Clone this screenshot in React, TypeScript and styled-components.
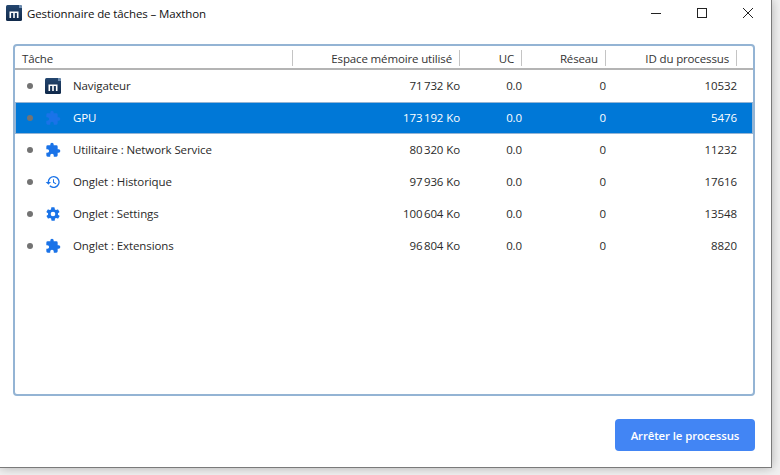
import React from "react";
import styled, { createGlobalStyle } from "styled-components";

const Global = createGlobalStyle`
  html, body { margin: 0; padding: 0; width: 780px; height: 475px; overflow: hidden; background: #f1f1f1; }
  body { font-family: "Open Sans", "Liberation Sans", sans-serif; font-size: 12px; color: #1b1b1b; }
`;

const Win = styled.div`
  width: 772px; height: 468px; box-sizing: border-box; background: #fff;
  border-right: 1px solid #7a7a7a; border-bottom: 1px solid #7a7a7a;
  box-shadow: 0 0 10px rgba(0,0,0,.28);
  display: flex; flex-direction: column;
`;
const TitleBar = styled.div`
  height: 44px; flex: none; display: flex; align-items: flex-start; padding: 5px 0 0 6px; box-sizing: border-box;
`;
const TitleText = styled.span`
  margin-left: 5px; margin-top: 1px; line-height: 16px; font-size: 11.5px; letter-spacing: -0.12px; color: #111;
`;
const WinBtns = styled.div`
  margin-left: auto; display: flex; gap: 30px; padding: 2px 15px 0 0;
`;
const Panel = styled.div`
  margin-left: 13px; width: 742px; height: 352px; box-sizing: border-box;
  border: 2px solid #94b4d4; border-radius: 4px; background: #fff; flex: none;
`;
const grid = `display: grid; grid-template-columns: 277px 167px 62px 84px 131px; padding-left: 1px;`;
const Head = styled.div`
  ${grid} height: 24px; box-sizing: border-box; padding-top: 2px; border-bottom: 2px solid #b4b4b4; align-items: center; font-size: 11.5px; letter-spacing: -0.14px; color: #333;
`;
const HeadCell = styled.div<{ $left?: boolean }>`
  height: 16px; line-height: 18px; box-sizing: border-box; border-right: 1px solid #c4c4c4; white-space: nowrap;
  text-align: ${p => (p.$left ? "left" : "right")};
  padding: ${p => (p.$left ? "0 0 0 6px" : "0 7px 0 0")};
`;
const Row = styled.div<{ $sel?: boolean }>`
  ${grid} height: 32px; box-sizing: border-box; align-items: center; font-size: 11.5px; letter-spacing: -0.1px;
  color: ${p => (p.$sel ? "#fff" : "#2a2a2a")};
  background: ${p => (p.$sel ? "#0078d7" : "#fff")};
  box-shadow: ${p => (p.$sel ? "inset 0 0 0 1px #94b4d4" : "none")};
`;
const TaskCell = styled.div`
  display: flex; align-items: center; padding-left: 11px;
`;
const TaskName = styled.span`
  padding-bottom: 2px;
`;
const Dot = styled.span`
  width: 6px; height: 6px; border-radius: 50%; background: #737373; flex: none;
`;
const IconBox = styled.span`
  width: 16px; height: 16px; margin-left: 12px; margin-right: 12px; flex: none; display: flex;
`;
const Num = styled.div`
  text-align: right; white-space: nowrap; padding-bottom: 2px;
`;
const Footer = styled.div`
  flex: none; display: flex; justify-content: flex-end; padding: 23px 16px 0 0;
`;
const StopBtn = styled.button`
  width: 140px; height: 32px; border: 0; border-radius: 4px; background: #4285f4; color: #fff;
  font: 600 11.4px "Open Sans", sans-serif; letter-spacing: -0.1px; padding: 0;
`;

const Logo = () => (
  <svg width={16} height={16} viewBox="0 0 16 16">
    <defs>
      <linearGradient id="lg" x1="0" y1="0" x2="0" y2="1">
        <stop offset="0" stopColor="#24466f" />
        <stop offset="1" stopColor="#10294a" />
      </linearGradient>
    </defs>
    <rect width="16" height="16" rx="1.5" fill="url(#lg)" />
    <path d="M13 0h1.5A1.5 1.5 0 0 1 16 1.5V3h-3z" fill="#6f8fb2" />
    <path d="M3.5 13V6.5h9V13h-1.6V8H8.8v5H7.2V8H5.1v5z" fill="#fff" />
  </svg>
);
const Puzzle = () => (
  <svg width="16" height="16" viewBox="0 0 24 24" fill="#1a73e8">
    <path d="M20.5 11H19V7a2 2 0 0 0-2-2h-4V3.5a2.5 2.5 0 0 0-5 0V5H4a2 2 0 0 0-2 2v3.8h1.5a2.7 2.7 0 0 1 0 5.4H2V20a2 2 0 0 0 2 2h3.8v-1.5a2.7 2.7 0 0 1 5.4 0V22H17a2 2 0 0 0 2-2v-4h1.5a2.5 2.5 0 0 0 0-5z" />
  </svg>
);
const History = () => (
  <svg width="16" height="16" viewBox="0 0 24 24" fill="#1a73e8">
    <path d="M13 3a9 9 0 0 0-9 9H1l3.9 3.9.1.1L9 12H6a7 7 0 1 1 2.05 4.95l-1.42 1.42A9 9 0 1 0 13 3zm-1 5v5l4.25 2.52.77-1.28-3.52-2.09V8z" />
  </svg>
);
const Gear = () => (
  <svg width="16" height="16" viewBox="0 0 24 24" fill="#1a73e8">
    <path d="M19.4 13a7.6 7.6 0 0 0 0-2l2.1-1.6a.5.5 0 0 0 .1-.6l-2-3.5a.5.5 0 0 0-.6-.2l-2.5 1a7.3 7.3 0 0 0-1.7-1l-.4-2.6a.5.5 0 0 0-.5-.5h-4a.5.5 0 0 0-.5.4l-.4 2.7a7.3 7.3 0 0 0-1.7 1l-2.5-1a.5.5 0 0 0-.6.2l-2 3.5a.5.5 0 0 0 .1.6L4.6 11a7.6 7.6 0 0 0 0 2l-2.1 1.6a.5.5 0 0 0-.1.6l2 3.5c.1.2.4.3.6.2l2.5-1c.5.4 1.1.7 1.7 1l.4 2.6c0 .3.2.5.5.5h4c.3 0 .5-.2.5-.4l.4-2.7a7.3 7.3 0 0 0 1.7-1l2.5 1c.2.1.5 0 .6-.2l2-3.5a.5.5 0 0 0-.1-.6zM12 15.5a3.5 3.5 0 1 1 0-7 3.5 3.5 0 0 1 0 7z" />
  </svg>
);

const rows = [
  { icon: <Logo />, name: "Navigateur", mem: "71\u202F732 Ko", pid: "10532" },
  { icon: <Puzzle />, name: "GPU", mem: "173\u202F192 Ko", pid: "5476", sel: true },
  { icon: <Puzzle />, name: "Utilitaire : Network Service", mem: "80\u202F320 Ko", pid: "11232" },
  { icon: <History />, name: "Onglet : Historique", mem: "97\u202F936 Ko", pid: "17616" },
  { icon: <Gear />, name: "Onglet : Settings", mem: "100\u202F604 Ko", pid: "13548" },
  { icon: <Puzzle />, name: "Onglet : Extensions", mem: "96\u202F804 Ko", pid: "8820" },
];

export default function App() {
  return (
    <>
      <Global />
      <Win>
        <TitleBar>
          <Logo />
          <TitleText>Gestionnaire de tâches – Maxthon</TitleText>
          <WinBtns>
            <svg width="16" height="12" viewBox="0 0 16 12"><path d="M3 6.5h10" stroke="#222" /></svg>
            <svg width="16" height="12" viewBox="0 0 16 12"><rect x="3.5" y="1.5" width="9" height="9" fill="none" stroke="#222" /></svg>
            <svg width="16" height="12" viewBox="0 0 16 12"><path d="M3 1l10 10M13 1L3 11" stroke="#222" fill="none" /></svg>
          </WinBtns>
        </TitleBar>
        <Panel>
          <Head>
            <HeadCell $left>Tâche</HeadCell>
            <HeadCell>Espace mémoire utilisé</HeadCell>
            <HeadCell>UC</HeadCell>
            <HeadCell>Réseau</HeadCell>
            <HeadCell>ID du processus</HeadCell>
          </Head>
          {rows.map(r => (
            <Row key={r.name} $sel={r.sel}>
              <TaskCell>
                <Dot />
                <IconBox>{r.icon}</IconBox>
                <TaskName>{r.name}</TaskName>
              </TaskCell>
              <Num>{r.mem}</Num>
              <Num>0.0</Num>
              <Num>0</Num>
              <Num>{r.pid}</Num>
            </Row>
          ))}
        </Panel>
        <Footer>
          <StopBtn>Arrêter le processus</StopBtn>
        </Footer>
      </Win>
    </>
  );
}
